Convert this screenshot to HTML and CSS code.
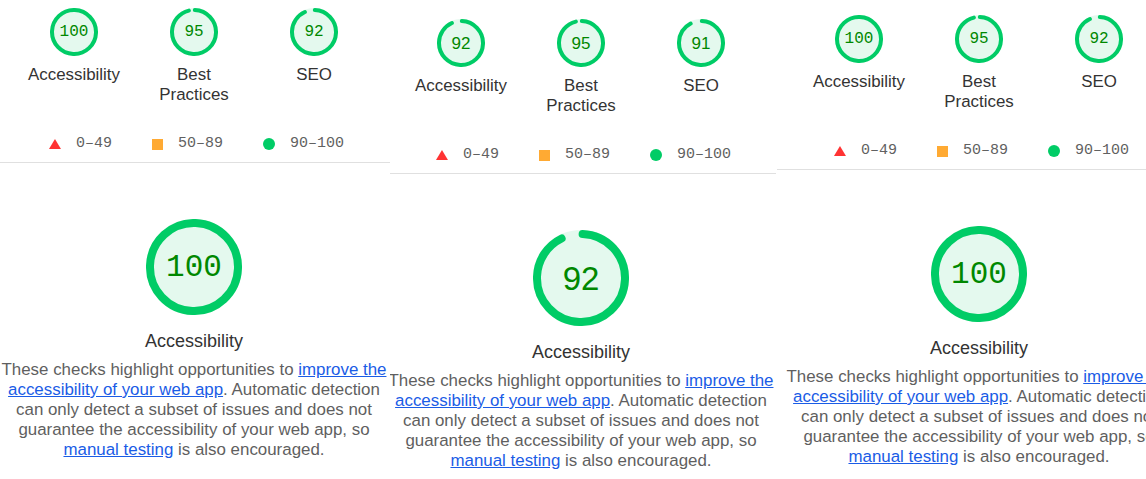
FILE: index.html
```html
<!DOCTYPE html>
<html lang="en">
<head>
<meta charset="utf-8">
<title>Lighthouse report</title>
<link rel="stylesheet" href="styles.css">
</head>
<body>
<main class="report">

  <section class="panel panel--a">
    <div class="inner">
      <div class="scores">
        <div class="gauge">
          <div class="gauge__ring">
            <svg width="48" height="48" viewBox="0 0 48 48"><circle class="base" cx="24" cy="24" r="22" stroke-width="4"/><circle class="arc" cx="24" cy="24" r="22" stroke-width="4" transform="rotate(-87.9 24 24)" stroke-dasharray="138.23 138.23"/></svg>
            <span class="gauge__value mono">100</span>
          </div>
          <div class="gauge__label">Accessibility</div>
        </div>
        <div class="gauge">
          <div class="gauge__ring">
            <svg width="48" height="48" viewBox="0 0 48 48"><circle class="base" cx="24" cy="24" r="22" stroke-width="4"/><circle class="arc" cx="24" cy="24" r="22" stroke-width="4" transform="rotate(-87.9 24 24)" stroke-dasharray="131.32 138.23"/></svg>
            <span class="gauge__value mono">95</span>
          </div>
          <div class="gauge__label">Best Practices</div>
        </div>
        <div class="gauge">
          <div class="gauge__ring">
            <svg width="48" height="48" viewBox="0 0 48 48"><circle class="base" cx="24" cy="24" r="22" stroke-width="4"/><circle class="arc" cx="24" cy="24" r="22" stroke-width="4" transform="rotate(-87.9 24 24)" stroke-dasharray="127.17 138.23"/></svg>
            <span class="gauge__value mono">92</span>
          </div>
          <div class="gauge__label">SEO</div>
        </div>
      </div>
      <div class="legend">
        <span class="legend__item"><i class="icon icon--fail"></i>0–49</span>
        <span class="legend__item"><i class="icon icon--average"></i>50–89</span>
        <span class="legend__item"><i class="icon icon--pass"></i>90–100</span>
      </div>
    </div>
    <div class="divider"></div>
    <div class="inner category">
      <div class="gauge__ring gauge__ring--big">
        <svg width="96" height="96" viewBox="0 0 96 96"><circle class="base" cx="48" cy="48" r="44" stroke-width="8"/><circle class="arc" cx="48" cy="48" r="44" stroke-width="8" transform="rotate(-87.9 48 48)" stroke-dasharray="276.46 276.46"/></svg>
        <span class="gauge__value gauge__value--big mono">100</span>
      </div>
      <h2 class="category__title">Accessibility</h2>
      <p class="category__desc">These checks highlight opportunities to <a href="#">improve the<br>accessibility of your web app</a>. Automatic detection<br>can only detect a subset of issues and does not<br>guarantee the accessibility of your web app, so<br><a href="#">manual testing</a> is also encouraged.</p>
    </div>
  </section>

  <section class="panel panel--b">
    <div class="inner">
      <div class="scores">
        <div class="gauge">
          <div class="gauge__ring">
            <svg width="48" height="48" viewBox="0 0 48 48"><circle class="base" cx="24" cy="24" r="22" stroke-width="4"/><circle class="arc" cx="24" cy="24" r="22" stroke-width="4" transform="rotate(-87.9 24 24)" stroke-dasharray="127.17 138.23"/></svg>
            <span class="gauge__value sans">92</span>
          </div>
          <div class="gauge__label">Accessibility</div>
        </div>
        <div class="gauge">
          <div class="gauge__ring">
            <svg width="48" height="48" viewBox="0 0 48 48"><circle class="base" cx="24" cy="24" r="22" stroke-width="4"/><circle class="arc" cx="24" cy="24" r="22" stroke-width="4" transform="rotate(-87.9 24 24)" stroke-dasharray="131.32 138.23"/></svg>
            <span class="gauge__value sans">95</span>
          </div>
          <div class="gauge__label">Best Practices</div>
        </div>
        <div class="gauge">
          <div class="gauge__ring">
            <svg width="48" height="48" viewBox="0 0 48 48"><circle class="base" cx="24" cy="24" r="22" stroke-width="4"/><circle class="arc" cx="24" cy="24" r="22" stroke-width="4" transform="rotate(-87.9 24 24)" stroke-dasharray="125.79 138.23"/></svg>
            <span class="gauge__value sans">91</span>
          </div>
          <div class="gauge__label">SEO</div>
        </div>
      </div>
      <div class="legend">
        <span class="legend__item"><i class="icon icon--fail"></i>0–49</span>
        <span class="legend__item"><i class="icon icon--average"></i>50–89</span>
        <span class="legend__item"><i class="icon icon--pass"></i>90–100</span>
      </div>
    </div>
    <div class="divider"></div>
    <div class="inner category">
      <div class="gauge__ring gauge__ring--big">
        <svg width="96" height="96" viewBox="0 0 96 96"><circle class="base" cx="48" cy="48" r="44" stroke-width="8"/><circle class="arc" cx="48" cy="48" r="44" stroke-width="8" transform="rotate(-87.9 48 48)" stroke-dasharray="254.34 276.46"/></svg>
        <span class="gauge__value gauge__value--big sans">92</span>
      </div>
      <h2 class="category__title">Accessibility</h2>
      <p class="category__desc">These checks highlight opportunities to <a href="#">improve the<br>accessibility of your web app</a>. Automatic detection<br>can only detect a subset of issues and does not<br>guarantee the accessibility of your web app, so<br><a href="#">manual testing</a> is also encouraged.</p>
    </div>
  </section>

  <section class="panel panel--c">
    <div class="inner">
      <div class="scores">
        <div class="gauge">
          <div class="gauge__ring">
            <svg width="48" height="48" viewBox="0 0 48 48"><circle class="base" cx="24" cy="24" r="22" stroke-width="4"/><circle class="arc" cx="24" cy="24" r="22" stroke-width="4" transform="rotate(-87.9 24 24)" stroke-dasharray="138.23 138.23"/></svg>
            <span class="gauge__value mono">100</span>
          </div>
          <div class="gauge__label">Accessibility</div>
        </div>
        <div class="gauge">
          <div class="gauge__ring">
            <svg width="48" height="48" viewBox="0 0 48 48"><circle class="base" cx="24" cy="24" r="22" stroke-width="4"/><circle class="arc" cx="24" cy="24" r="22" stroke-width="4" transform="rotate(-87.9 24 24)" stroke-dasharray="131.32 138.23"/></svg>
            <span class="gauge__value mono">95</span>
          </div>
          <div class="gauge__label">Best Practices</div>
        </div>
        <div class="gauge">
          <div class="gauge__ring">
            <svg width="48" height="48" viewBox="0 0 48 48"><circle class="base" cx="24" cy="24" r="22" stroke-width="4"/><circle class="arc" cx="24" cy="24" r="22" stroke-width="4" transform="rotate(-87.9 24 24)" stroke-dasharray="127.17 138.23"/></svg>
            <span class="gauge__value mono">92</span>
          </div>
          <div class="gauge__label">SEO</div>
        </div>
      </div>
      <div class="legend">
        <span class="legend__item"><i class="icon icon--fail"></i>0–49</span>
        <span class="legend__item"><i class="icon icon--average"></i>50–89</span>
        <span class="legend__item"><i class="icon icon--pass"></i>90–100</span>
      </div>
    </div>
    <div class="divider"></div>
    <div class="inner category">
      <div class="gauge__ring gauge__ring--big">
        <svg width="96" height="96" viewBox="0 0 96 96"><circle class="base" cx="48" cy="48" r="44" stroke-width="8"/><circle class="arc" cx="48" cy="48" r="44" stroke-width="8" transform="rotate(-87.9 48 48)" stroke-dasharray="276.46 276.46"/></svg>
        <span class="gauge__value gauge__value--big mono">100</span>
      </div>
      <h2 class="category__title">Accessibility</h2>
      <p class="category__desc">These checks highlight opportunities to <a href="#">improve the<br>accessibility of your web app</a>. Automatic detection<br>can only detect a subset of issues and does not<br>guarantee the accessibility of your web app, so<br><a href="#">manual testing</a> is also encouraged.</p>
    </div>
  </section>

</main>
</body>
</html>
```

FILE: styles.css
```css
* {
  box-sizing: border-box;
  margin: 0;
  padding: 0;
}

html, body {
  background: #fff;
}

body {
  width: 1146px;
  height: 479px;
  overflow: hidden;
  font-family: "Liberation Sans", Arial, sans-serif;
  color: #333;
}

.report {
  display: flex;
  align-items: flex-start;
}

.panel {
  flex: none;
  height: 479px;
  overflow: hidden;
}

.panel--a {
  width: 390px;
  padding-top: 8px;
  --shift: 0px;
}

.panel--b {
  width: 386px;
  padding-top: 19px;
  --shift: -3px;
}

.panel--c {
  width: 369px;
  margin-left: 1px;
  padding-top: 15px;
  --shift: 8px;
}

.inner {
  width: 388px;
  margin-left: var(--shift);
}

/* score gauges row */
.scores {
  display: flex;
  justify-content: center;
}

.gauge {
  width: 120px;
  display: flex;
  flex-direction: column;
  align-items: center;
}

.gauge__ring {
  position: relative;
  width: 48px;
  height: 48px;
}

.gauge__ring svg {
  display: block;
}

.gauge__ring--big {
  width: 96px;
  height: 96px;
}

.base {
  fill: #0c6;
  stroke: #0c6;
  opacity: 0.1;
}

.arc {
  fill: none;
  stroke: #0c6;
  stroke-linecap: round;
}

.gauge__value {
  position: absolute;
  inset: 0;
  display: flex;
  align-items: center;
  justify-content: center;
  color: #080;
  line-height: 1;
}

.mono {
  font-family: "Liberation Mono", "DejaVu Sans Mono", monospace;
  font-size: 16px;
}

.sans {
  font-family: "Liberation Sans", Arial, sans-serif;
  font-size: 17px;
}

.gauge__value--big.mono {
  font-size: 31px;
}

.gauge__value--big.sans {
  font-size: 33px;
}

.gauge__label {
  margin-top: 9px;
  width: 98px;
  text-align: center;
  font-size: 16.9px;
  line-height: 20px;
  color: #333;
}

/* legend */
.legend {
  margin-top: 29px;
  padding-left: 5px;
  display: flex;
  justify-content: center;
  gap: 40px;
  height: 20px;
  font-family: "Liberation Mono", "DejaVu Sans Mono", monospace;
  font-size: 15px;
  line-height: 20px;
  color: #616161;
}

.legend__item {
  display: flex;
  align-items: center;
  gap: 15px;
}

.icon {
  display: block;
  flex: none;
}

.icon--fail {
  width: 12px;
  height: 10px;
  background: #f33;
  clip-path: polygon(50% 0, 100% 100%, 0 100%);
}

.icon--average {
  width: 11px;
  height: 11px;
  background: #fa3;
}

.icon--pass {
  width: 12px;
  height: 12px;
  border-radius: 50%;
  background: #0c6;
}

.divider {
  margin-top: 8px;
  height: 1px;
  background: #e0e0e0;
}

/* category section */
.category {
  display: flex;
  flex-direction: column;
  align-items: center;
  margin-top: 56px;
}

.category__title {
  margin-top: 14px;
  font-size: 18px;
  line-height: 24px;
  font-weight: normal;
  color: #333;
}

.category__desc {
  margin-top: 7px;
  font-size: 16.9px;
  line-height: 20px;
  text-align: center;
  white-space: nowrap;
  color: #5f5f5f;
}

.category__desc a {
  color: #1a5ce6;
  text-decoration: underline;
}
```
